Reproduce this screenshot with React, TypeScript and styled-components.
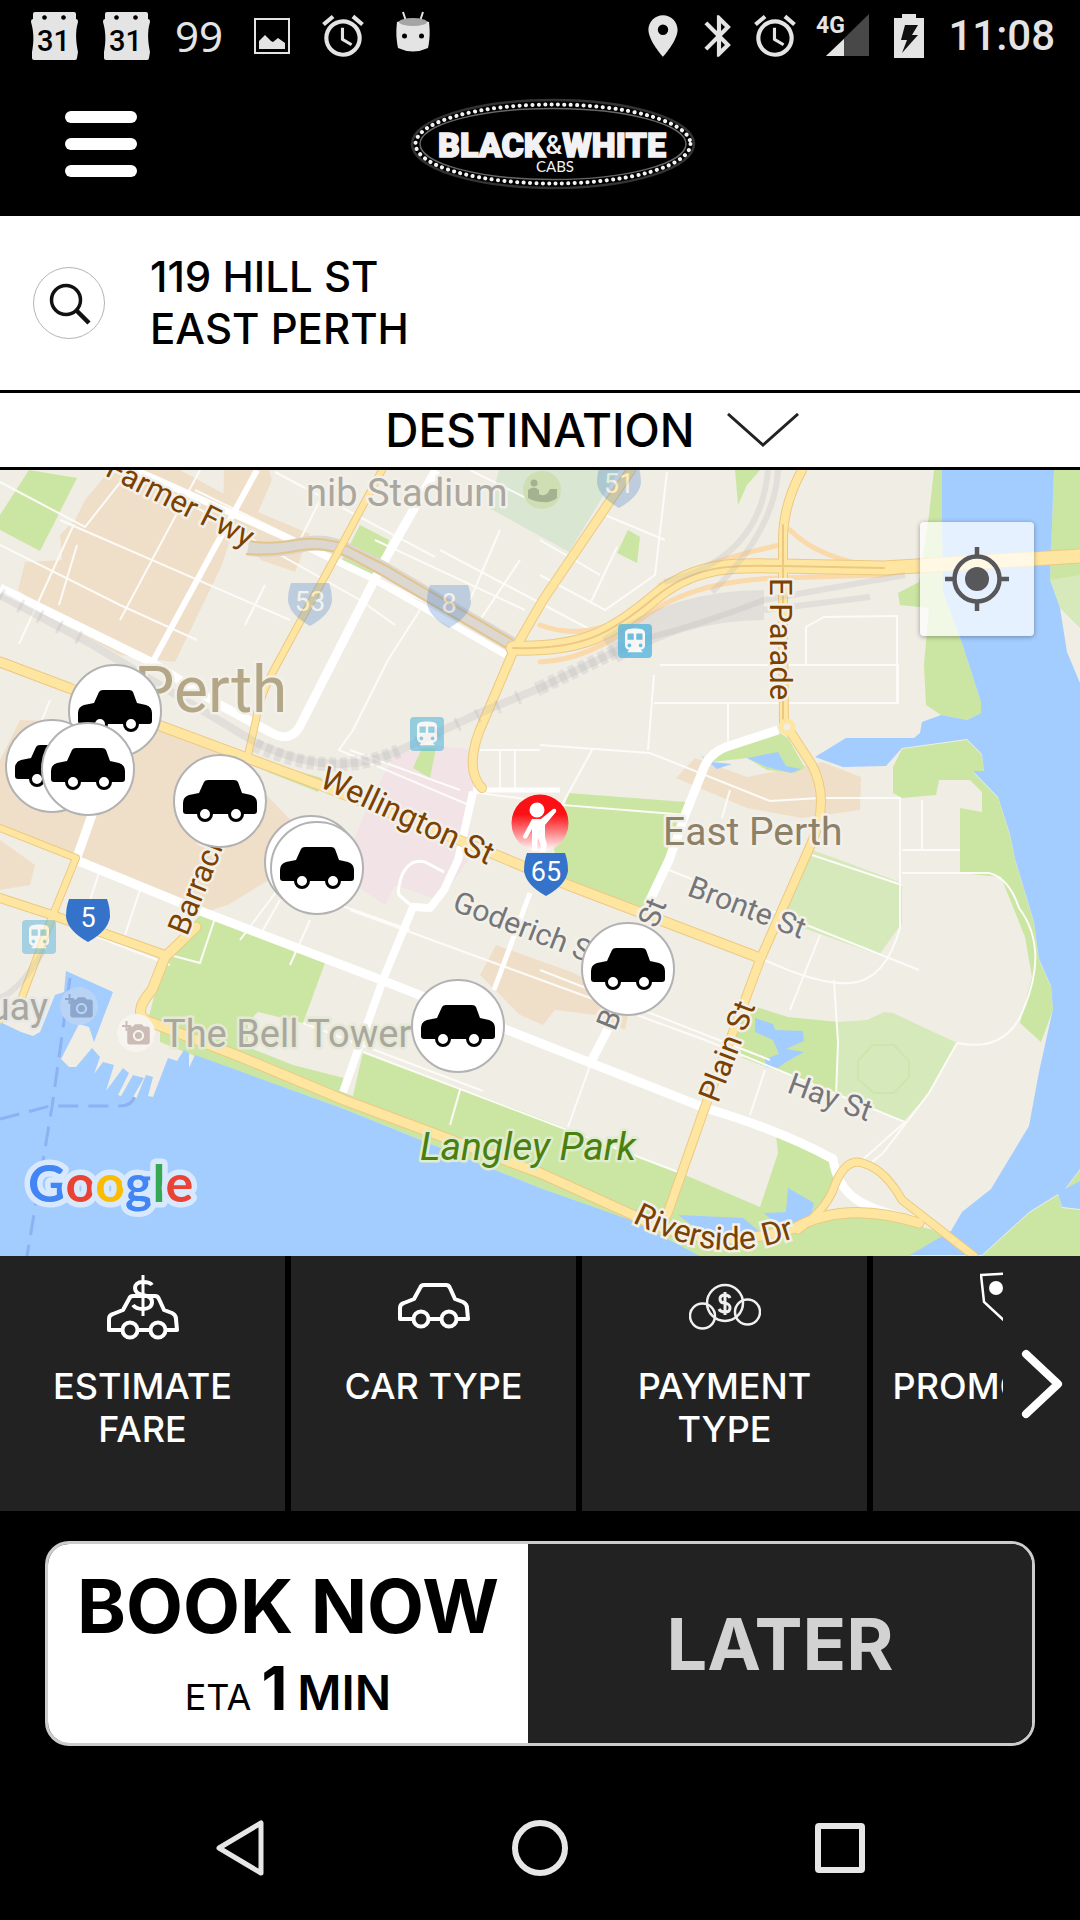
import React from "react";
import styled, { createGlobalStyle } from "styled-components";
import { MdAlarm, MdBluetooth, MdLocationOn, MdPhotoCamera, MdDirectionsTransit } from "react-icons/md";

const brandFont = '"Inter", "Liberation Sans", sans-serif';
const systemFont = '"Roboto", "Liberation Sans", sans-serif';

const GlobalStyle = createGlobalStyle`
  *, *::before, *::after { box-sizing: border-box; }
  body { margin: 0; background: #000; font-family: ${brandFont}; }
  button { margin: 0; padding: 0; border: 0; background: none; color: inherit; font: inherit; cursor: pointer; }
  svg { display: block; flex: none; }
`;

const Screen = styled.div`
  display: flex;
  flex-direction: column;
  min-height: 100vh;
  background: #000;
`;

const StatusBar = styled.div`
  display: flex;
  align-items: center;
  justify-content: space-between;
  height: 72px;
  padding: 0 25px 0 31px;
  color: #e4e4e4;
  font-family: ${systemFont};
`;

const StatusGroup = styled.div<{ $gap: number }>`
  display: flex;
  align-items: center;
  gap: ${(p) => p.$gap}px;
`;

const StatusCount = styled.span`
  font: 400 42px/48px "Noto Sans", sans-serif;
  padding: 0 6px 0 0;
`;

const Clock = styled.span`
  font-size: 42px;
  line-height: 48px;
  font-weight: 500;
`;

const Header = styled.header`
  display: grid;
  grid-template-columns: 1fr auto 1fr;
  align-items: center;
  height: 144px;
  padding: 0 40px 0 65px;
`;

const MenuButton = styled.button`
  display: flex;
  flex-direction: column;
  gap: 15px;
  width: 72px;
`;

const MenuBar = styled.span`
  height: 12px;
  border-radius: 6px;
  background: #fff;
`;

const PickupRow = styled.section`
  display: flex;
  align-items: center;
  gap: 45px;
  height: 177px;
  padding: 0 33px;
  background: #fff;
  border-bottom: 3px solid #000;
`;

const SearchButton = styled.button`
  display: grid;
  place-items: center;
  width: 72px;
  height: 72px;
  border: 1px solid #b5b5b5;
  border-radius: 50%;
`;

const Address = styled.button`
  color: #000;
  font-size: 42px;
  line-height: 52px;
  font-weight: 500;
  text-align: left;
`;

const AddressLine = styled.span`
  display: block;
`;

const DestinationRow = styled.button`
  display: grid;
  grid-template-columns: 1fr auto 1fr;
  align-items: center;
  column-gap: 32px;
  width: 100%;
  height: 77px;
  background: #fff;
  border-bottom: 3px solid #000;
`;

const DestinationLabel = styled.span`
  grid-column: 2;
  color: #000;
  font-size: 46px;
  line-height: 52px;
  font-weight: 500;
`;

const MapArea = styled.main`
  position: relative;
  overflow: hidden;
  aspect-ratio: 1080 / 786;
  background: #f0ede5;
`;

const MapDrawing = styled.svg`
  width: 100%;
  height: 100%;
  font-family: ${systemFont};
`;

const Pin = styled.button`
  position: absolute;
  transform: translate(-50%, -50%);
`;

const CarPin = styled(Pin)`
  display: grid;
  place-items: center;
  width: 94px;
  height: 94px;
  border: 2px solid #b2b2b2;
  border-radius: 50%;
  background: #fff;
`;

const LocateButton = styled.button`
  position: absolute;
  top: 52px;
  right: 46px;
  display: grid;
  place-items: center;
  width: 114px;
  height: 114px;
  border-radius: 4px;
  background: rgba(255, 255, 255, 0.72);
  box-shadow: 0 1px 5px rgba(0, 0, 0, 0.35);
`;

const OptionsBar = styled.nav`
  display: flex;
  height: 255px;
  background: #222;
`;

const OptionsStrip = styled.div`
  display: flex;
  flex: 1;
  gap: 6px;
  min-width: 0;
  overflow: hidden;
  background: #000;
`;

const Option = styled.button`
  display: flex;
  flex: 0 0 285px;
  flex-direction: column;
  align-items: center;
  gap: 23px;
  padding: 14px 16px 0;
  background: #222;
  color: #fff;
  font-size: 36px;
  line-height: 43px;
  font-weight: 500;
  text-align: center;
`;

const NextButton = styled.button`
  display: grid;
  place-items: center;
  width: 77px;
`;

const Booking = styled.section`
  display: grid;
  grid-template-columns: 480fr 504fr;
  height: 205px;
  margin: 30px 45px;
  overflow: hidden;
  border: 3px solid #ccc;
  border-radius: 24px;
`;

const BookNow = styled.button`
  display: flex;
  flex-direction: column;
  align-items: center;
  padding-top: 16px;
  background: #fff;
  color: #000;
`;

const BookTitle = styled.span`
  font-size: 74px;
  line-height: 92px;
  font-weight: 700;
`;

const Eta = styled.span`
  display: flex;
  align-items: baseline;
  gap: 10px;
  line-height: 72px;
  font-size: 36px;
`;

const EtaNumber = styled.strong`
  font-size: 60px;
  font-weight: 700;
`;

const EtaUnit = styled.span`
  font-size: 48px;
  font-weight: 600;
`;

const Later = styled.button`
  background: #222;
  color: #d2d2d2;
  font-size: 72px;
  font-weight: 700;
`;

const SystemNav = styled.nav`
  display: grid;
  grid-template-columns: repeat(3, 1fr);
  align-items: center;
  height: 144px;
  padding: 0 90px;
`;

const NavButton = styled.button`
  display: grid;
  place-items: center;
  height: 96px;
`;

const CalendarIcon = () => (
  <svg width="47" height="48" viewBox="0 0 47 48">
    <path
      fill="#e4e4e4"
      fillRule="evenodd"
      d="M4 0h39q2 0 2 2l0 5q2 0 2 3c-3 10-2 20 0 30l-1 6q0 2-2 2H3q-2 0-2-2l0-6c2-10 2-20-1-30q0-3 2-3l0-5q0-2 2-2zM13.500 3.200a2.300 2.300 0 1 0 .01 0zM32.500 3.200a2.300 2.300 0 1 0 .01 0z"
    />
    <text x="22.500" y="39" textAnchor="middle" fontSize="29" fontWeight="500" fill="#000">31</text>
  </svg>
);

const PictureIcon = () => (
  <svg width="36" height="36" viewBox="0 0 36 36">
    <rect x="1" y="1" width="34" height="34" fill="none" stroke="#e4e4e4" strokeWidth="2" />
    <path d="M5 31V23l6-6 6 6 2 1 5-4 7 5v6z" fill="#e4e4e4" />
  </svg>
);

const RobotIcon = () => (
  <svg width="34" height="50" viewBox="0 0 34 50">
    <path d="M7 1l3 9M27 1l-3 9" stroke="#e4e4e4" strokeWidth="2" />
    <path d="M1 11q16-6 32 0c1 9 1 16-1 26q-15 7-30 0c-2-10-2-17-1-26z" fill="#e4e4e4" />
    <ellipse cx="17" cy="11" rx="14" ry="4" fill="#a5a5a5" />
    <circle cx="8.500" cy="25" r="2.500" />
    <circle cx="25.500" cy="25" r="2.500" />
  </svg>
);

const SignalIcon = () => (
  <svg width="54" height="58" viewBox="0 -6 54 58">
    <path d="M53 1v42H10z" fill="#484848" />
    <path d="M28 26v17H10z" fill="#e4e4e4" />
    <text x="0" y="20" fontSize="23" fontWeight="700" fill="#e4e4e4">4G</text>
  </svg>
);

const BatteryIcon = () => (
  <svg width="30" height="44" viewBox="0 0 30 44">
    <path d="M8 0h14v4h8v40H0V4h8z" fill="#e4e4e4" />
    <path d="M11 11h13l-6 10h6L8 39l5-13H7z" fill="#111" />
  </svg>
);

const Logo = () => (
  <svg width="286" height="92" viewBox="0 0 286 92" role="img" aria-label="Black & White Cabs">
    <ellipse cx="143" cy="46" rx="141" ry="44" fill="none" stroke="#333" strokeWidth="2.500" />
    <ellipse cx="143" cy="46" rx="137.500" ry="39.500" fill="none" stroke="#f4f4f4" strokeWidth="4" strokeLinecap="round" strokeDasharray="0.1 6.300" />
    <ellipse cx="143" cy="46" rx="133" ry="35.500" fill="none" stroke="#666" strokeWidth="1.500" />
    <g fill="#f2f2f4" fontFamily={systemFont} textAnchor="middle">
      <text x="142" y="59" fontSize="34" fontWeight="900" stroke="#f2f2f4" strokeWidth="1.500">
        BLACK<tspan fontSize="26" fontWeight="500" strokeWidth="0" dy="-3">&amp;</tspan><tspan dy="3">WHITE</tspan>
      </text>
      <text x="145" y="74" fontSize="15" fontFamily="Lato, sans-serif">CABS</text>
    </g>
  </svg>
);

const SearchIcon = () => (
  <svg width="48" height="48" viewBox="0 0 48 48" fill="none" stroke="#111" strokeWidth="3.500">
    <circle cx="21" cy="21" r="14.500" />
    <path d="M31 31l13 13" strokeWidth="4.500" />
  </svg>
);

const ChevronDown = () => (
  <svg width="72" height="34" viewBox="0 0 72 34" fill="none" stroke="#222" strokeWidth="3">
    <path d="M1 1l35 31L71 1" />
  </svg>
);

const CarGlyph = () => (
  <svg width="76" height="44" viewBox="0 0 76 44">
    <path d="M22 3q1-2 4-2h26q3 0 4 2l4 11 9 2q6 2 6 8v8q0 3-3 3H4q-3 0-3-3v-8q0-6 6-8l10-2z" />
    <circle cx="23" cy="35" r="6.500" fill="#fff" stroke="#000" strokeWidth="3" />
    <circle cx="54" cy="35" r="6.500" fill="#fff" stroke="#000" strokeWidth="3" />
  </svg>
);

const CarOutline = ({ dy = 0 }: { dy?: number }) => (
  <g transform={`translate(0 ${dy})`} fill="none" stroke="#fff" strokeWidth="4" strokeLinejoin="round">
    <path d="M15 49H2V38q0-4 4-5l10-4 6-11q1-3 4-3h22q3 0 4 3l5 11 8 3q4 2 4 6l1 11H59M31 49h12" />
    <circle cx="23" cy="49" r="7.500" />
    <circle cx="51" cy="49" r="7.500" />
  </g>
);

const EstimateIcon = () => (
  <svg width="72" height="72" viewBox="0 0 72 72">
    <CarOutline dy={11} />
    <path d="M45 15q-2-3-9-3c-6 0-8 3-8 6 0 4 3 6 8 7 6 1 9 3 9 7s-3 7-9 7c-5 0-8-1-10-4" fill="none" stroke="#fff" strokeWidth="4" />
    <path d="M36 5v41" stroke="#fff" strokeWidth="3" />
  </svg>
);

const CarTypeIcon = () => (
  <svg width="72" height="72" viewBox="0 0 72 72"><CarOutline /></svg>
);

const PaymentIcon = () => (
  <svg width="72" height="72" viewBox="0 0 72 72" fill="none" stroke="#f0f0f0" strokeWidth="2.500">
    <circle cx="36" cy="33" r="18" />
    <circle cx="13.500" cy="46" r="12.500" />
    <circle cx="58.500" cy="42" r="12.500" />
    <path d="M41 28q-1-3-5-3c-4 0-5 2-5 4 0 3 2 4 5 4 4 1 5 2 5 5s-2 4-5 4-5-1-6-3M36 22v23" strokeWidth="3" />
  </svg>
);

const PromoIcon = () => (
  <svg width="72" height="72" viewBox="0 0 72 72" fill="none" stroke="#fff" strokeWidth="2.500">
    <path d="M1 5l38-2 31 32-28 32L4 32z" />
    <circle cx="16" cy="18" r="7" fill="#fff" stroke="none" />
  </svg>
);

type Point = { x: number; y: number };
const cars: Point[] = [
  { x: 115, y: 711 },
  { x: 52, y: 766 },
  { x: 88, y: 769 },
  { x: 220, y: 801 },
  { x: 311, y: 862 },
  { x: 317, y: 868 },
  { x: 628, y: 969 },
  { x: 458, y: 1026 },
];
const place = ({ x, y }: Point) => ({ left: `${(x / 1080) * 100}%`, top: `${((y - 470) / 786) * 100}%` });

const commercial = [
  "M85 500L110 470H180L235 500 230 540 222 565 205 600 175 662 120 655 60 622 18 590 25 562 62 560 60 535 75 520z",
  "M224 470h45l3 10-14 32 52 22-15 38-34-12-38-45z",
  "M20 720L160 725 245 765 262 790 300 830 285 870 228 905 205 912 80 862 0 832V760z",
  "M0 840l35 25-5 20-30 5z",
  "M695 758l52 19 75-15 39 15-1 33-58 8-55-10-71-30z",
  "M496 945l78 28 56 32-5 25-30-15-40-5-12 15-23-10-40-40z",
];
const parks = [
  "M29 470L77 478 40 551 0 530V515z",
  "M360 525l29 15-10 37-38-15z",
  "M735 470h25l-13 15-9 20z",
  "M628 530l12 7-3 26-20-10z",
  "M934 470h8v50l1 72 19 51 19 59v11l-14 7-26-5-15-10-2-40 5-57-29-3-2-12 21-11 10-67z",
  "M1054 470h26v110h-30z",
  "M902 749l65-9 15 15 2 17h-11l25 26 12 37 5 25 19 63 5 37 12 27 2 23-12 32-21-19 12-46-7-40-24-60-41-4v-65l22 4v-20l-12-12h-31l-3 15-34 3-9-5v-26z",
  "M712 762l16-14 50-16 10 6 17 30-10 5-28-3-20-12z",
  "M568 793l118 9-17 58-29 52-72-27-14-35z",
  "M750 1005l38 12 50 5-2 71-93-35-10-21z",
  "M203 912l123 48-23 63-45-11-10 10v25l45 18 51 13-6 26L148 1020l7-27 21-53z",
  "M160 1020v22l35 14 149 53 196 79 100 37 60 31h130l-40-20L540 1170z",
  "M363 1052l177 66 138 54 82 35 18-54-2-18 57 27 3 31-36 63H700L540 1180 352 1100z",
  "M690 1256l90-24 60-24 60 14 55 13-45 21z",
  "M982 1256l47-43 29-18 4 13 18 2v46z",
  "M1065 1190l15-20v12l-9 9z",
  "M258 760l64 18-4 14-50-20z",
  "M422 748h14l-6 30-17-10z",
];
const fields = [
  "M812 850l28 10 62 23v40l-23 32-98-35 21-47z",
  "M838 1022l29-2 17-8 9 1 64 30-28 50-26 29-67-29z",
  "M1050 580l10 28 20 20V575z",
];
const water = [
  "M0 1022l21 10 12 4 7-4 15-37 9-3 2-21 47 21-19 50-5-15-10-3-18 35 8 8h7l16-19 8 9-6 17 9-12 11 3-8 26 17-23 6 5-11 22 3 1 12-21 11 3-11 19 3 2 10-24 7 2-5 19 5 1 15-39 9 3 7-11 5 3v15l6-13 149 54 196 79 93 33 67 35H0z",
  "M942 470v50l1 72 19 51 19 59v11l-14 7-26-5-19 7-2 11-6 5h-68l-31 19 28 10 43-1 16-18 65-9 15 15 2 17h-11l25 26 12 37 5 25 19 63 5 37 12 27 2 23-14 63-10 54-38 63-29 23-11 19-41 24h72l47-43 29-18 4 13 18 2v-28l-15 8 15-20V683l-13-31-7-44-10-28 4-110z",
  "M747 758l31-6 8 14 15 3-10 4-24-6zM700 755l12 7 20 2-15 5z",
  "M788 1188l26 15-3 14-32 10-15-14 22-1z",
  "M678 1215l65 3 17 14-48 8z",
  "M755 1018l18 6 2 6 28 1 1 10-18 8 18 3-18 10-8 6-12-1-1-8 14-5-6-14-18-8z",
];
const lightRoads =
  "M0 482l85 45 45-57M0 545l120 60 77 35M60 520l230 100M74 524l-55 120M77 545l-18 60M195 490l340 165M200 470l-80 150M275 472l160 85M320 500l-20 40M265 585l-20 40M130 470L360 600 395 625M420 610l-32 50-35 70-14 20 130 55M440 550l170 90M470 470l70 35M500 530l-30 70M520 560l-40 60M375 540l150 70M540 540l60 35M605 515l60 25M591 602l26-55M540 575l65 35 50-35 12-103M654 675l-6 75M660 665h238v38H654M806 665v-38l18-10 73-1v87M728 702v45M540 745l110 8 120 48 50-3h80v85M592 750l-30 55 125 10M730 790l-8 28M922 800v50M902 850h58M760 958q60 28 90 25 35-2 50-55V883M812 855l90 30M669 870l250 100M820 935l-30 75M834 980l4 62-2 55M957 1043q50 10 67-35 25-60-5-100-10-30-30-35h-87M957 1043l-28 50-46 60-18 15M705 1040l200 82-45 40M765 1070l-15 45M350 910L705 1040M410 930L270 880M300 860L240 940M310 920l-20 45M280 900l-20 35M460 1090l-10 35M592 1060l-24 67M363 1052l315 120M303 1023l180 68M540 970l230 90M170 955l30 8 15-45M100 870l-15 45M140 890l-15 45M80 930l90 35M480 750h60M500 750v40M515 750v40M470 792l80 10M350 750l110 40M50 700l-20 50";

const mainRoads: { d: string; w: number }[] = [
  { d: "M135 470L303 545 372 578 506 655", w: 7 },
  { d: "M257 470L151 665", w: 6 },
  { d: "M436 470L382 565 302 722Q292 745 270 732L220 705 151 662 0 588", w: 9 },
  { d: "M93 812L76 860 203 912 384 981 540 1043 705 1108Q780 1130 833 1159C838 1195 860 1210 925 1222", w: 9 },
  { d: "M343 1092L384 977 413 907 430 908 444 890 458 860 473 792", w: 8 },
  { d: "M413 907L399 895Q397 890 402 875 410 858 425 862L444 872", w: 3 },
  { d: "M473 790H560", w: 5 },
  { d: "M778 730L726 747Q709 753 703 770L685 815 669 860 650 900M609 1027L592 1060", w: 9 },
  { d: "M530 893L494 990", w: 5 },
];

const ramps = "M540 662Q590 660 640 620T781 578L880 575 940 566M790 530Q820 560 880 567M540 625Q580 640 620 620M660 585Q710 560 780 545";

const arterials: { d: string; w: number }[] = [
  { d: "M0 662L69 688 158 725 320 785 489 852 568 885 760 958", w: 9 },
  { d: "M382 470L331 565 275 668Q258 700 256 720L248 755", w: 6 },
  { d: "M513 648C580 650 610 635 654 598S740 566 781 566L884 568 1080 556", w: 13 },
  { d: "M631 470L543 600 513 652 479 732Q465 770 482 788", w: 8 },
  { d: "M802 470Q783 505 783 540V632L784 722 812 765Q830 800 812 842L760 960 705 1107 667 1215", w: 8 },
  { d: "M0 828L76 858 52 917 21 1000M0 1020l21-20", w: 6 },
  { d: "M0 898L52 915 165 955", w: 8 },
  { d: "M196 927L165 957 152 990Q130 1015 150 1022L241 1057 344 1100 540 1173 633 1215Q710 1255 795 1228 845 1200 919 1223", w: 9 },
  { d: "M798 1230Q825 1210 833 1190 845 1155 865 1164 885 1170 902 1200L974 1256", w: 7 },
];

const Shield = ({ x, y, text, faded }: Point & { text: string; faded?: boolean }) => (
  <g transform={`translate(${x} ${y})`} opacity={faded ? 0.26 : 1}>
    <path d="M-19 0H19Q22 8 22 18 20 32 0 43-20 32-22 18-22 8-19 0z" fill="#3473c9" />
    <text y="28" textAnchor="middle" fontSize="27" fill="#fff">{text}</text>
  </g>
);

const Station = ({ x, y, opacity = 0.6 }: Point & { opacity?: number }) => (
  <g opacity={opacity}>
    <rect x={x} y={y} width="34" height="34" rx="4" fill="#58b7de" />
    <MdDirectionsTransit x={x + 2} y={y + 2} size={30} color="#fff" />
  </g>
);

const PhotoSpot = ({ x, y, tint, bg }: Point & { tint: string; bg: string }) => (
  <g>
    <circle cx={x} cy={y} r="19" fill={bg} />
    <MdPhotoCamera x={x - 11} y={y - 11} size={27} color={tint} />
    <path d={`M${x - 14} ${y - 7}h9M${x - 9.5} ${y - 12}v10`} stroke={tint} strokeWidth="2" />
  </g>
);

type LabelProps = Point & { text: string; size?: number; angle?: number; color: string; halo?: string; italic?: boolean; end?: boolean };
const Label = ({ x, y, text, size = 30, angle = 0, color, halo = "#f3f0e9", italic, end }: LabelProps) => (
  <text
    transform={`translate(${x} ${y}) rotate(${angle})`}
    fontSize={size}
    fill={color}
    stroke={halo}
    strokeWidth="5"
    strokeLinejoin="round"
    paintOrder="stroke"
    fontStyle={italic ? "italic" : "normal"}
    textAnchor={end ? "end" : "start"}
  >
    {text}
  </text>
);

const brown = "#7a4100";
const grey = "#747679";
const poi = "#aaa79f";

const CityMap = () => (
  <MapDrawing viewBox="0 470 1080 786" preserveAspectRatio="xMidYMid slice" role="img" aria-label="Map of East Perth">
    <g fill="#f0dfc8">{commercial.map((d) => <path key={d} d={d} />)}</g>
    <path d="M430 745l45 5-7 110-28 40-45-15-10 20-45-30 30-75 25-45z" fill="#f1e3e6" />
    <g fill="#cbe6a3">{parks.map((d) => <path key={d} d={d} />)}</g>
    <g fill="#d5e9ba">{fields.map((d) => <path key={d} d={d} />)}</g>
    <path d="M499 470H619L569 552 489 508z" fill="#d8e6d2" />
    <g fill="#a3ccff">{water.map((d) => <path key={d} d={d} />)}</g>
    <path d="M872 1045h22l15 16v16l-15 16h-20l-16-14v-18z" fill="none" stroke="#cde6ae" strokeWidth="2" />
    <path d="M70 978L52 1107 27 1256M0 1119l50-13h70q12 0 15-10" fill="none" stroke="#8db2f3" strokeWidth="3" strokeDasharray="20 10" />
    <path d={lightRoads} fill="none" stroke="#fcfbf8" strokeWidth="2" />
    <g fill="none" stroke="#fff" strokeLinejoin="round">
      {mainRoads.map((r) => <path key={r.d} d={r.d} strokeWidth={r.w} />)}
    </g>
    <path d="M248 548Q270 552 296 546 325 538 350 552L382 568 513 645" fill="none" stroke="#ddd7d2" strokeWidth="15" />
    <path d="M250 541Q270 545 296 540 330 535 355 550L385 565 513 640M246 554Q270 556 296 551 325 545 350 558L380 574 510 650" fill="none" stroke="#e0c68c" strokeWidth="2" />
    <g fill="none" strokeLinejoin="round" strokeLinecap="round">
      <path d={ramps} stroke="#fad9ab" strokeWidth="5" />
      {arterials.map((r) => <path key={r.d} d={r.d} stroke="#ecc983" strokeWidth={r.w + 2} />)}
      {arterials.map((r) => <path key={r.d} d={r.d} stroke="#ffe6a0" strokeWidth={r.w} />)}
      <path d="M513 648C580 650 610 635 654 598S740 566 781 566L884 568M783 525V722" stroke="#ecc983" strokeWidth="2" />
      <circle cx="787" cy="727" r="6" fill="#f0ede5" stroke="#ffe6a0" strokeWidth="5" />
    </g>
    <g fill="none" stroke="#a8a8b0" strokeOpacity="0.2">
      <path d="M0 595L93 645 255 742Q330 780 396 752L482 712 540 688 643 638" strokeWidth="8" />
      <path d="M255 745Q330 780 396 752M540 688L643 638" strokeWidth="14" strokeDasharray="7 4" />
      <path d="M0 595L93 645M396 752L540 688" strokeWidth="14" strokeDasharray="3 19" />
      <path d="M610 650Q680 605 764 605" strokeWidth="30" />
      <path d="M640 640Q700 625 764 600L905 575M764 610L870 597" strokeWidth="6" />
      <path d="M778 470Q775 530 712 592M768 470Q760 560 664 582" strokeWidth="6" />
      <path d="M44 950Q20 990 0 998" strokeWidth="6" />
    </g>

    <Shield x={310} y={583} text="53" faded />
    <Shield x={449} y={585} text="8" faded />
    <Shield x={619} y={465} text="51" faded />
    <Shield x={88} y={899} text="5" />
    <Station x={410} y={717} />
    <Station x={618} y={624} opacity={0.8} />
    <Station x={22} y={920} opacity={0.5} />
    <PhotoSpot x={79} y={1006} tint="#8da7cc" bg="#b9d3f7" />
    <PhotoSpot x={136} y={1033} tint="#cbbdb5" bg="#f7f4f0" />
    <circle cx="542" cy="490" r="19" fill="#cfdfb4" />
    <circle cx="534" cy="483" r="3.500" fill="#a5b292" />
    <path d="M528 498v-8q6-5 11 0v4q7 4 11-5h7v9q-6 5-14 4-8 0-15-4z" fill="#a5b292" />

    <Label x={306} y={506} text="nib Stadium" size={38} color={poi} />
    <Label x={134} y={712} text="Perth" size={64} color="#b3a788" />
    <Label x={104} y={475} text="Farmer Fwy" size={31} angle={27} color={brown} />
    <Label x={318} y={786} text="Wellington St" size={32} angle={25} color={brown} />
    <Label x={187} y={937} text="Barrack" size={31} angle={-68} color={brown} />
    <Label x={770} y={578} text="E Parade" size={31} angle={90} color={brown} />
    <Label x={663} y={845} text="East Perth" size={39} color="#8d8167" />
    <Label x={686} y={895} text="Bronte St" angle={21} color={grey} />
    <Label x={451} y={910} text="Goderich St" angle={21} color={grey} />
    <Label x={615} y={1032} text="Bennett St" angle={-68} color={grey} />
    <Label x={718} y={1104} text="Plain St" size={31} angle={-69} color={brown} />
    <Label x={786} y={1092} text="Hay St" angle={20} color={grey} />
    <Label x={420} y={1160} text="Langley Park" size={39} color="#4a8010" halo="#dfeccd" italic />
    <Label x={163} y={1047} text="The Bell Tower" size={38} color={poi} halo="#e6e9d6" />
    <Label x={48} y={1020} text="Quay" size={38} color={poi} halo="#e6e9e6" end />
    <path id="riverside" d="M632 1222Q672 1242 705 1248 750 1256 810 1232" fill="none" />
    <text fontSize="32" fill={brown} stroke="#f3f0e9" strokeWidth="5" paintOrder="stroke">
      <textPath href="#riverside">Riverside Dr</textPath>
    </text>
    <text x="28" y="1202" fontSize="52" fontWeight="700" fontFamily="Lato, sans-serif" stroke="#d9e9fd" strokeWidth="11" strokeLinejoin="round" paintOrder="stroke">
      <tspan fill="#4285f4">G</tspan><tspan fill="#ea4335">o</tspan><tspan fill="#fbbc05">o</tspan><tspan fill="#4285f4">g</tspan><tspan fill="#34a853">l</tspan><tspan fill="#ea4335">e</tspan>
    </text>
    <Shield x={546} y={853} text="65" />
  </MapDrawing>
);

const PersonPin = () => (
  <svg width="60" height="66" viewBox="0 0 60 66">
    <defs>
      <linearGradient id="pickup" x1="0" y1="0" x2="0" y2="1">
        <stop offset="0.35" stopColor="#fb1016" />
        <stop offset="1" stopColor="#fff" />
      </linearGradient>
    </defs>
    <circle cx="30" cy="31" r="28.500" fill="url(#pickup)" />
    <circle cx="27" cy="18" r="7.500" fill="#fff" />
    <path d="M22 27h9l12-10q4-1 3 3L35 33v12l2 8-2 7h-5l1-6-3-8-1 13h-5V37l-5 9q-4 2-4-2z" fill="#fff" />
  </svg>
);

const LocateIcon = () => (
  <svg width="66" height="66" viewBox="0 0 66 66" fill="none" stroke="#58585a" strokeWidth="4.500">
    <circle cx="33" cy="33" r="22.500" />
    <circle cx="33" cy="33" r="12" fill="#58585a" stroke="none" />
    <path d="M33 1v10M33 55v10M1 33h10M55 33h10" />
  </svg>
);

const options = [
  { label: "ESTIMATE FARE", Icon: EstimateIcon },
  { label: "CAR TYPE", Icon: CarTypeIcon },
  { label: "PAYMENT TYPE", Icon: PaymentIcon },
  { label: "PROMO CODE", Icon: PromoIcon },
];

export default function App() {
  return (
    <Screen>
      <GlobalStyle />
      <StatusBar>
        <StatusGroup $gap={28}>
          <StatusGroup $gap={25}>
            <CalendarIcon />
            <CalendarIcon />
            <StatusCount>99</StatusCount>
            <PictureIcon />
          </StatusGroup>
          <MdAlarm size={50} />
          <RobotIcon />
        </StatusGroup>
        <StatusGroup $gap={24}>
          <StatusGroup $gap={16}>
            <StatusGroup $gap={6}>
              <MdLocationOn size={50} />
              <MdBluetooth size={50} />
              <MdAlarm size={50} />
            </StatusGroup>
            <SignalIcon />
          </StatusGroup>
          <BatteryIcon />
          <Clock>11:08</Clock>
        </StatusGroup>
      </StatusBar>
      <Header>
        <MenuButton aria-label="Menu">
          <MenuBar />
          <MenuBar />
          <MenuBar />
        </MenuButton>
        <Logo />
      </Header>
      <PickupRow>
        <SearchButton aria-label="Search pickup address"><SearchIcon /></SearchButton>
        <Address>
          <AddressLine>119 HILL ST</AddressLine>
          <AddressLine>EAST PERTH</AddressLine>
        </Address>
      </PickupRow>
      <DestinationRow>
        <DestinationLabel>DESTINATION</DestinationLabel>
        <ChevronDown />
      </DestinationRow>
      <MapArea>
        <CityMap />
        <Pin aria-label="Pickup point" style={place({ x: 540, y: 825 })}><PersonPin /></Pin>
        {cars.map((car) => (
          <CarPin key={`${car.x}-${car.y}`} aria-label="Available cab" style={place(car)}><CarGlyph /></CarPin>
        ))}
        <LocateButton aria-label="My location"><LocateIcon /></LocateButton>
      </MapArea>
      <OptionsBar>
        <OptionsStrip>
          {options.map(({ label, Icon }) => (
            <Option key={label}>
              <Icon />
              <span>{label}</span>
            </Option>
          ))}
        </OptionsStrip>
        <NextButton aria-label="More options">
          <svg width="42" height="70" viewBox="0 0 42 70" fill="none" stroke="#fff" strokeWidth="8" strokeLinecap="round" strokeLinejoin="round">
            <path d="M5 5l32 30L5 65" />
          </svg>
        </NextButton>
      </OptionsBar>
      <Booking>
        <BookNow>
          <BookTitle>BOOK NOW</BookTitle>
          <Eta>
            <span>ETA</span>
            <EtaNumber>1</EtaNumber>
            <EtaUnit>MIN</EtaUnit>
          </Eta>
        </BookNow>
        <Later>LATER</Later>
      </Booking>
      <SystemNav>
        <NavButton aria-label="Back">
          <svg width="50" height="58" viewBox="0 0 50 58" fill="none" stroke="#e6e6e6" strokeWidth="5" strokeLinejoin="round">
            <path d="M46 4v50L4 29z" />
          </svg>
        </NavButton>
        <NavButton aria-label="Home">
          <svg width="58" height="58" viewBox="0 0 58 58" fill="none" stroke="#e6e6e6" strokeWidth="6">
            <circle cx="29" cy="29" r="25" />
          </svg>
        </NavButton>
        <NavButton aria-label="Recent apps">
          <svg width="50" height="50" viewBox="0 0 50 50" fill="none" stroke="#e6e6e6" strokeWidth="6" strokeLinejoin="round">
            <rect x="3" y="3" width="44" height="44" rx="1" />
          </svg>
        </NavButton>
      </SystemNav>
    </Screen>
  );
}
